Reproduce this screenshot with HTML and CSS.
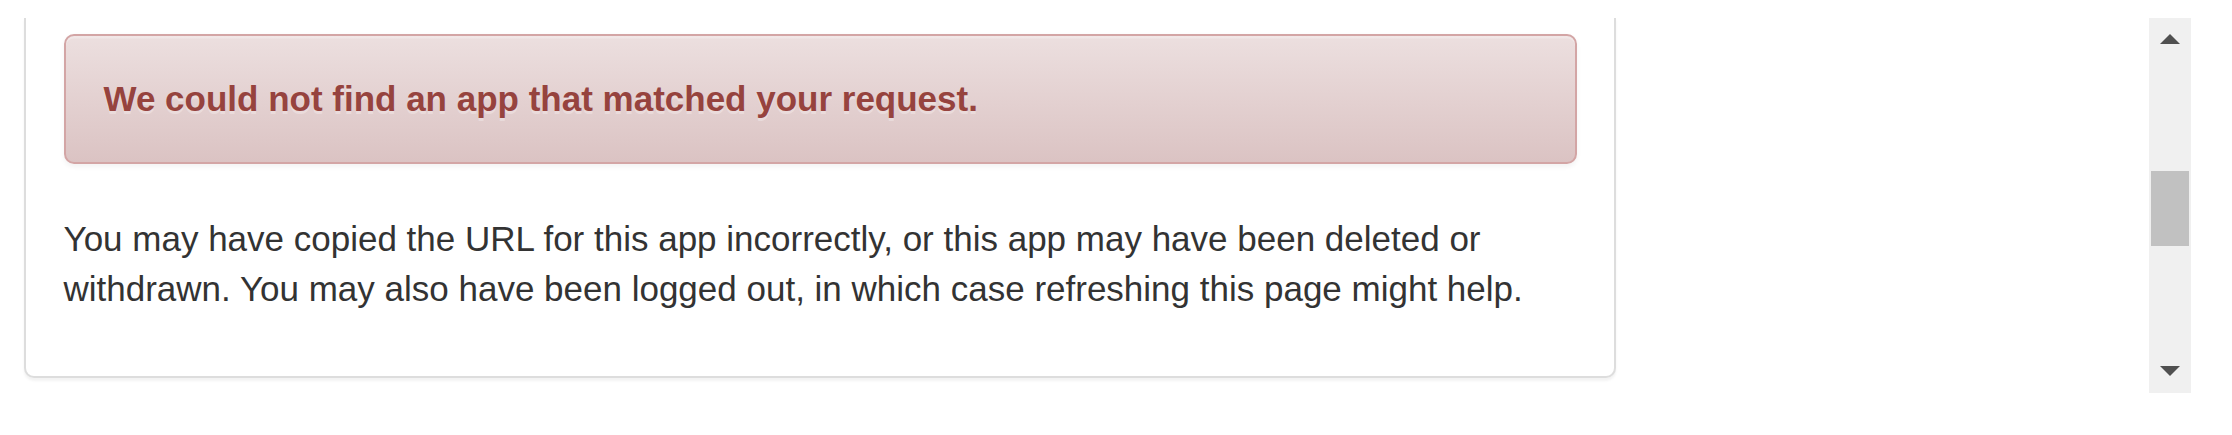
FILE: index.html
```html
<!DOCTYPE html>
<html lang="en">
<head>
<meta charset="utf-8">
<title>App not found</title>
<link rel="stylesheet" href="styles.css">
</head>
<body>
<div class="viewport">
  <div class="frame">
    <div class="content">
      <div class="panel">
        <div class="alert"><strong>We could not find an app that matched your request.</strong></div>
        <p class="message">You may have copied the URL for this app incorrectly, or this app may have been deleted or withdrawn. You may also have been logged out, in which case refreshing this page might help.</p>
      </div>
    </div>
    <div class="scrollbar">
      <div class="sb-btn"><span class="arrow-up"></span></div>
      <div class="sb-track"><div class="sb-thumb"></div></div>
      <div class="sb-btn"><span class="arrow-down"></span></div>
    </div>
  </div>
</div>
</body>
</html>
```

FILE: styles.css
```css
html, body {
  margin: 0;
  padding: 0;
  background: #fff;
}

body {
  font-family: "Liberation Sans", Arial, Helvetica, sans-serif;
  font-size: 35px;
  line-height: 50px;
  color: #333;
}

.viewport {
  padding: 18px 41px 0 0;
}

.frame {
  display: flex;
  height: 375px;
}

.content {
  flex: 1;
  overflow: hidden;
}

.panel {
  box-sizing: border-box;
  width: 1592px;
  margin-left: 24px;
  padding: 16px 37.5px 37px 37.5px;
  border: 2px solid #ddd;
  border-top: none;
  border-radius: 0 0 10px 10px;
  background: #fff;
  box-shadow: 0 2.5px 2.5px rgba(0, 0, 0, 0.05);
}

.alert {
  padding: 38px;
  margin-bottom: 50px;
  border: 2px solid #d3a5a5;
  border-radius: 10px;
  background-image: linear-gradient(to bottom, #ecdfdf 0%, #dbc3c3 100%);
  color: #96433e;
  text-shadow: 0 2.5px 0 rgba(255, 255, 255, 0.3);
  box-shadow: inset 0 2.5px 0 rgba(255, 255, 255, 0.25), 0 2.5px 5px rgba(0, 0, 0, 0.05);
}

.alert strong {
  font-weight: 700;
}

.message {
  margin: 0 0 25px;
}

.scrollbar {
  width: 42px;
  flex: none;
  display: flex;
  flex-direction: column;
  background: #f0f0f0;
}

.sb-btn {
  height: 42px;
  display: flex;
  align-items: center;
  justify-content: center;
}

.arrow-up {
  width: 0;
  height: 0;
  border-left: 10px solid transparent;
  border-right: 10px solid transparent;
  border-bottom: 10px solid #505050;
  margin-top: -1px;
}

.arrow-down {
  width: 0;
  height: 0;
  border-left: 10px solid transparent;
  border-right: 10px solid transparent;
  border-top: 10px solid #505050;
  margin-top: -2px;
}

.sb-track {
  flex: 1;
  display: flex;
  flex-direction: column;
  align-items: center;
}

.sb-thumb {
  width: 38px;
  height: 75px;
  margin-top: 111px;
  background: #c1c1c1;
}
```
